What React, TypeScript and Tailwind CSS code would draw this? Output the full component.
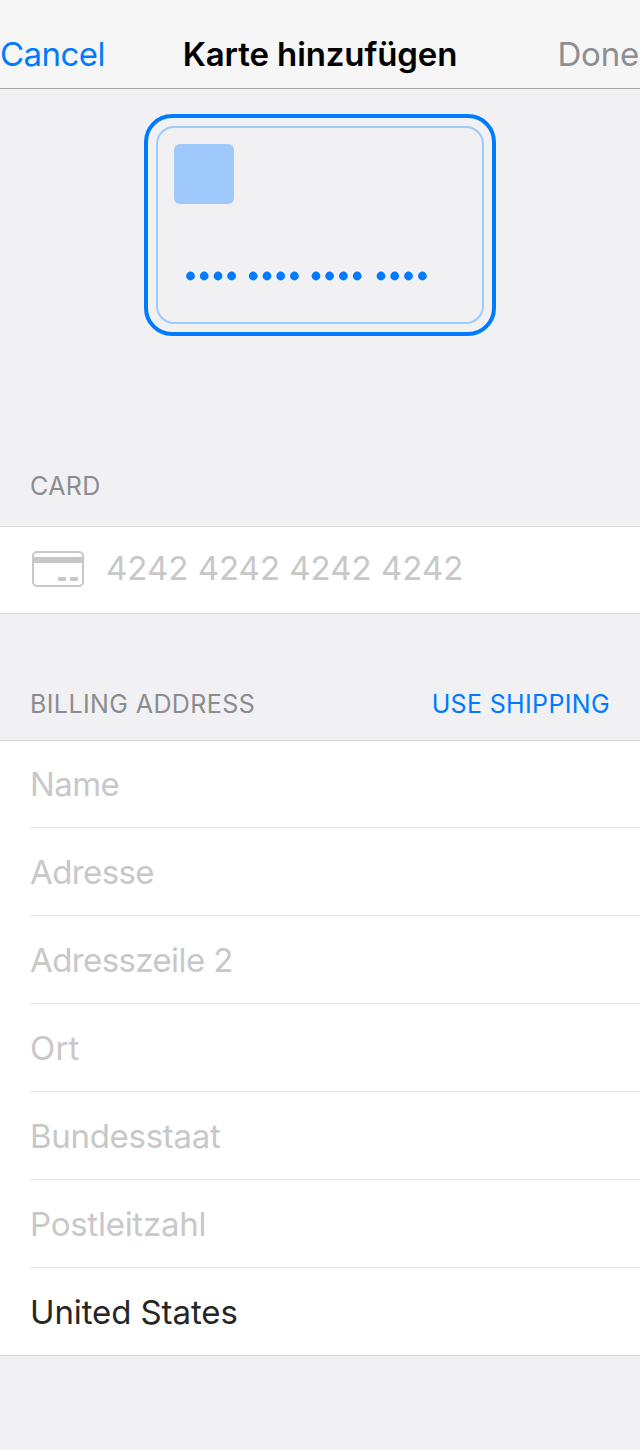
const fields = [
  { label: 'Name', style: 'h-[87px] pt-[23px] tracking-[-0.6px]' },
  { label: 'Adresse', style: 'h-[88px] pt-[24px] tracking-[-0.6px]' },
  { label: 'Adresszeile 2', style: 'h-[88px] pt-[24px] tracking-[-0.6px]' },
  { label: 'Ort', style: 'h-[88px] pt-[24px] tracking-[0.2px]' },
  { label: 'Bundesstaat', style: 'h-[88px] pt-[24px] tracking-[-0.3px]' },
  { label: 'Postleitzahl', style: 'h-[88px] pt-[24px] tracking-[-0.25px]' },
];

function CardIcon() {
  return (
    <svg width="52" height="36" viewBox="0 0 52 36" fill="none">
      <rect x="1" y="1" width="50" height="34" rx="4" stroke="#c8c8c8" strokeWidth="2" />
      <rect x="1" y="6" width="50" height="6" fill="#c8c8c8" />
      <rect x="26" y="26" width="8" height="4" rx="1" fill="#c8c8c8" />
      <rect x="38" y="26" width="8" height="4" rx="1" fill="#c8c8c8" />
    </svg>
  );
}

function CardPreview() {
  const dots = [190.5, 204.2, 218, 231.6, 253.2, 267, 280.7, 294.4, 316, 329.6, 343.4, 357.2, 381, 394.7, 408.5, 422.4];
  return (
    <svg className="block" width="352" height="222" viewBox="144 114 352 222" fill="none">
      <rect x="146" y="116" width="348" height="218" rx="26" stroke="#007aff" strokeWidth="4" />
      <rect x="157" y="127" width="326" height="196" rx="17" stroke="#9fcafb" strokeWidth="2" />
      <rect x="174" y="144" width="60" height="60" rx="6" fill="#9fc9fa" />
      {dots.map((x) => (
        <circle key={x} cx={x} cy="276" r="4.4" fill="#007aff" />
      ))}
    </svg>
  );
}

export default function App() {
  return (
    <div className="h-[1450px] w-[640px] overflow-hidden bg-[#f1f1f4] font-['Inter',sans-serif] text-[33px] leading-[40px] whitespace-nowrap">
      <header className="flex h-[89px] items-start justify-between border-b border-[#a6a6a8] bg-[#f6f6f6] pt-[34px]">
        <span className="w-[182px] tracking-[-0.55px] text-[#007aff]">Cancel</span>
        <h1 className="font-semibold tracking-[-0.1px] text-black">Karte hinzufügen</h1>
        <span className="w-[182px] pr-px text-right tracking-[-0.2px] text-[#8e8e93]">Done</span>
      </header>
      <div className="flex h-[377px] justify-center pt-[25px]">
        <CardPreview />
      </div>
      <div className="h-[60px] px-[30px] text-[25px] text-[#8c8c8f]">
        <span className="tracking-[0.4px]">CARD</span>
      </div>
      <div className="flex h-[88px] items-start border-y border-[#d9d9db] bg-white pl-8 text-[#c8c8c8]">
        <div className="pt-[24px]">
          <CardIcon />
        </div>
        <span className="ml-[22px] pt-[21px]">4242 4242 4242 4242</span>
      </div>
      <div className="flex h-[126px] items-start justify-between px-[30px] pt-[70px] text-[25px] text-[#8c8c8f]">
        <span className="tracking-[0.4px]">BILLING ADDRESS</span>
        <span className="tracking-[0.35px] text-[#007aff]">USE SHIPPING</span>
      </div>
      <div className="h-[616px] border-y border-[#d9d9db] bg-white pl-[30px]">
        {fields.map((f) => (
          <div key={f.label} className={`border-b border-[#e6e6e6] text-[#c8c8c8] ${f.style}`}>
            {f.label}
          </div>
        ))}
        <div className="pt-[24px] tracking-[-0.1px] text-[#262626]">United States</div>
      </div>
    </div>
  );
}
